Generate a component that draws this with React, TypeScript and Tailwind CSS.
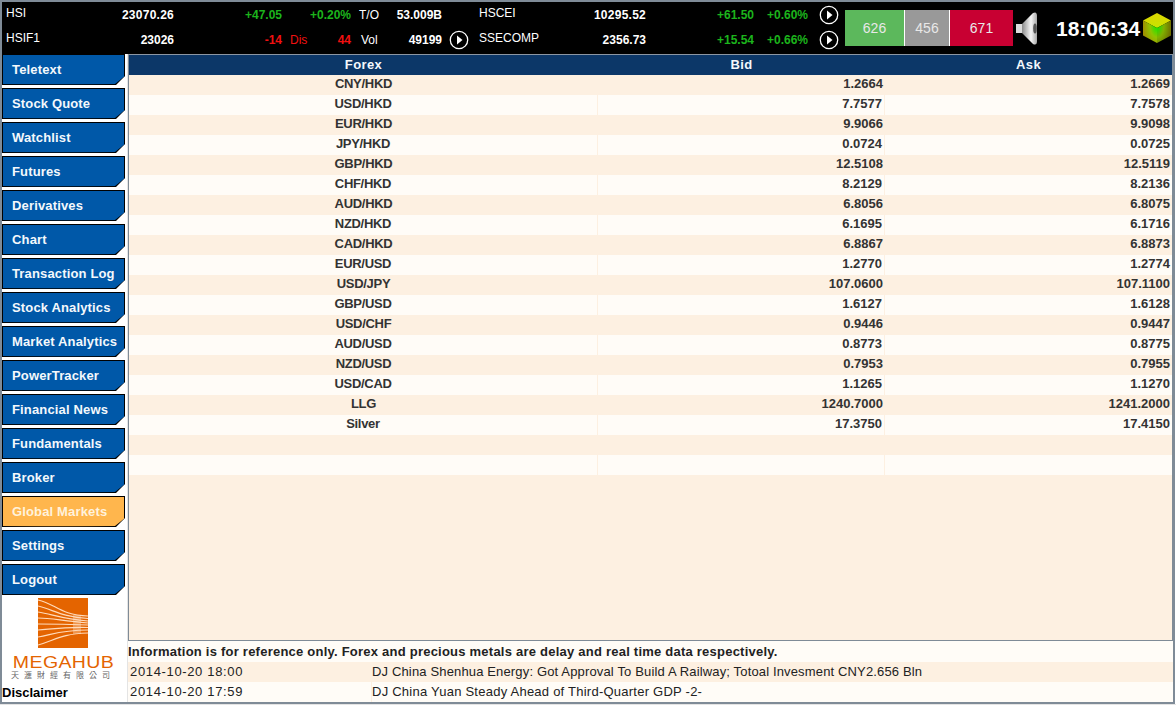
const font = "font-['Liberation_Sans',Arial,sans-serif]";

const quotes = [
  ["CNY/HKD", "1.2664", "1.2669"],
  ["USD/HKD", "7.7577", "7.7578"],
  ["EUR/HKD", "9.9066", "9.9098"],
  ["JPY/HKD", "0.0724", "0.0725"],
  ["GBP/HKD", "12.5108", "12.5119"],
  ["CHF/HKD", "8.2129", "8.2136"],
  ["AUD/HKD", "6.8056", "6.8075"],
  ["NZD/HKD", "6.1695", "6.1716"],
  ["CAD/HKD", "6.8867", "6.8873"],
  ["EUR/USD", "1.2770", "1.2774"],
  ["USD/JPY", "107.0600", "107.1100"],
  ["GBP/USD", "1.6127", "1.6128"],
  ["USD/CHF", "0.9446", "0.9447"],
  ["AUD/USD", "0.8773", "0.8775"],
  ["NZD/USD", "0.7953", "0.7955"],
  ["USD/CAD", "1.1265", "1.1270"],
  ["LLG", "1240.7000", "1241.2000"],
  ["Silver", "17.3750", "17.4150"],
  ["", "", ""],
  ["", "", ""],
];

const menu = [
  "Teletext",
  "Stock Quote",
  "Watchlist",
  "Futures",
  "Derivatives",
  "Chart",
  "Transaction Log",
  "Stock Analytics",
  "Market Analytics",
  "PowerTracker",
  "Financial News",
  "Fundamentals",
  "Broker",
  "Global Markets",
  "Settings",
  "Logout",
];

function PlayIcon() {
  return (
    <svg width="20" height="20" viewBox="0 0 20 20" className="shrink-0">
      <circle cx="10" cy="10" r="8.7" fill="none" stroke="#fff" strokeWidth="1.3" />
      <path d="M8 5.5 L13.5 10 L8 14.5 Z" fill="#fff" />
    </svg>
  );
}

function Speaker() {
  return (
    <svg width="24" height="33" viewBox="0 0 24 33">
      <defs>
        <linearGradient id="spk" x1="0" x2="1" y1="0" y2="0">
          <stop offset="0" stopColor="#8a8a8a" />
          <stop offset="0.6" stopColor="#f6f6f6" />
          <stop offset="1" stopColor="#a8a8a8" />
        </linearGradient>
      </defs>
      <rect x="1" y="12" width="7" height="9" fill="#dcdcdc" />
      <path d="M7 12 L18 1 Q22 -1 22 4 L22 29 Q22 34 18 32 L7 21 Z" fill="url(#spk)" />
      <ellipse cx="20" cy="16.5" rx="1.8" ry="5" fill="#555" />
    </svg>
  );
}

function Cube() {
  return (
    <svg width="30" height="32" viewBox="0 0 30 32">
      <defs>
        <radialGradient id="cubeTop" cx="0.5" cy="0.9" r="0.7">
          <stop offset="0" stopColor="#c8e400" />
          <stop offset="1" stopColor="#d8d800" />
        </radialGradient>
        <radialGradient id="cubeLeft" cx="1" cy="0.25" r="1">
          <stop offset="0" stopColor="#10e800" />
          <stop offset="0.5" stopColor="#90c400" />
          <stop offset="1" stopColor="#a09000" />
        </radialGradient>
        <radialGradient id="cubeRight" cx="0" cy="0.25" r="1">
          <stop offset="0" stopColor="#10e800" />
          <stop offset="0.5" stopColor="#80b000" />
          <stop offset="1" stopColor="#707000" />
        </radialGradient>
      </defs>
      <path d="M15 1 L29 8.5 L15 16 L1 8.5 Z" fill="url(#cubeTop)" />
      <path d="M1 8.5 L15 16 L15 31 L1 23.5 Z" fill="url(#cubeLeft)" />
      <path d="M29 8.5 L15 16 L15 31 L29 23.5 Z" fill="url(#cubeRight)" />
    </svg>
  );
}

function Logo() {
  return (
    <svg width="50" height="50" viewBox="0 0 50 50" className="block">
      <rect width="50" height="50" fill="#e46400" />
      <g fill="none" stroke="#ffdcbc" strokeWidth="1.2">
        <path d="M0 2 C18 6 22 17 50 18" />
        <path d="M0 8 C16 12 24 19 50 20.5" />
        <path d="M0 14 C14 16 24 21 50 23" />
        <path d="M0 20 C14 20 24 23 50 25" />
        <path d="M0 26 C14 26 24 26 50 27" />
        <path d="M0 32 C14 31 24 29 50 29.5" />
        <path d="M0 39 C16 36 24 32 50 32" />
        <path d="M0 47 C18 42 22 36 50 35" />
      </g>
      <rect x="35" y="17" width="8" height="19" fill="#ffdcbc" opacity="0.4" />
    </svg>
  );
}

function MenuButton({ label }: { label: string }) {
  const active = label === "Global Markets";
  return (
    <div className="h-[31px] w-[123px] bg-black [clip-path:polygon(0_0,100%_0,100%_calc(100%-9px),calc(100%-9px)_100%,0_100%)]">
      <div
        className={`flex h-[31px] w-[123px] items-center pt-[1px] pl-[9px] text-[13px] font-bold tracking-[0.15px] whitespace-nowrap border border-black [clip-path:polygon(0_0,100%_0,100%_calc(100%-9px),calc(100%-10px)_calc(100%-1px),0_100%)] ${
          active ? "bg-[#ffb64d] text-[#fff2dc]" : "bg-[#0058a8] text-[#f4f8fc]"
        }`}
      >
        {label}
      </div>
    </div>
  );
}

export default function App() {
  return (
    <div className="h-[705px] w-[1176px] border-b border-[#e4e4e4] bg-white">
      <div className={`${font} flex h-[704px] w-[1175px] flex-col overflow-hidden border-2 border-[#7f8b97] bg-white`}>
        {/* ticker bar */}
        <div className="flex h-[53px] shrink-0 items-start border-b border-[#8d97a3] bg-black pl-[4px] text-[12px] text-white">
          <div className="flex w-[833px] shrink-0 flex-col">
            <div className="flex h-[26px] items-center">
              <div className="w-[60px] pb-[4px]">HSI</div>
              <div className="w-[108px] text-right font-bold tracking-[0.25px]">23070.26</div>
              <div className="w-[108px] text-right font-bold text-[#1cb41c]">+47.05</div>
              <div className="w-[69px] text-right font-bold text-[#1cb41c]">+0.20%</div>
              <div className="w-[8px]" />
              <div className="w-[35px]">T/O</div>
              <div className="w-[48px] text-right font-bold">53.009B</div>
              <div className="w-[37px]" />
              <div className="w-[60px] pb-[4px]">HSCEI</div>
              <div className="w-[107px] text-right font-bold tracking-[0.25px]">10295.52</div>
              <div className="w-[108px] text-right font-bold text-[#1cb41c]">+61.50</div>
              <div className="w-[54px] text-right font-bold text-[#1cb41c]">+0.60%</div>
              <div className="ml-[11px]">
                <PlayIcon />
              </div>
            </div>
            <div className="flex h-[24px] items-center">
              <div className="w-[60px] pb-[5px]">HSIF1</div>
              <div className="w-[108px] text-right font-bold">23026</div>
              <div className="w-[108px] text-right font-bold text-[#f01010]">-14</div>
              <div className="ml-[8px] w-[28px] text-[#f01010]">Dis</div>
              <div className="w-[33px] text-right font-bold text-[#f01010]">44</div>
              <div className="w-[10px]" />
              <div className="w-[33px]">Vol</div>
              <div className="w-[48px] text-right font-bold">49199</div>
              <div className="ml-[7px]">
                <PlayIcon />
              </div>
              <div className="w-[10px]" />
              <div className="w-[60px] pb-[5px]">SSECOMP</div>
              <div className="w-[107px] text-right font-bold">2356.73</div>
              <div className="w-[108px] text-right font-bold text-[#1cb41c]">+15.54</div>
              <div className="w-[54px] text-right font-bold text-[#1cb41c]">+0.66%</div>
              <div className="ml-[11px]">
                <PlayIcon />
              </div>
            </div>
          </div>
          <div className="mt-[8px] ml-[6px] flex h-[36px] w-[168px] shrink-0 gap-[1px] bg-white text-[14px] leading-[36px] text-[#e8e8e8]">
            <div className="w-[59px] bg-[#5cb85c] text-center">626</div>
            <div className="w-[44px] bg-[#999999] text-center">456</div>
            <div className="w-[63px] bg-[#c80032] text-center">671</div>
          </div>
          <div className="mt-[10px] ml-[2px] shrink-0">
            <Speaker />
          </div>
          <div className="mt-[14px] ml-[17px] w-[86px] shrink-0 text-[21px] leading-[26px] font-bold whitespace-nowrap">18:06:34</div>
          <div className="mt-[10px] shrink-0">
            <Cube />
          </div>
        </div>

        <div className="flex min-h-0 flex-1">
          {/* side menu */}
          <div className="-mt-[1px] flex w-[126px] shrink-0 flex-col border-r border-[#e4e4e4] bg-white">
            <div className="flex flex-col gap-[3px]">
              {menu.map((m) => (
                <MenuButton key={m} label={m} />
              ))}
            </div>
            <div className="mt-[3px] flex w-[122px] flex-col items-center">
              <Logo />
              <div className="mt-[8px] scale-x-[1.22] text-[16px] leading-[14px] tracking-[0.3px] text-[#e46400]">MEGAHUB</div>
              <div className="font-['Noto_Sans_CJK_TC',sans-serif] text-[8px] leading-[10px] tracking-[5px] text-[#666]">天滙財經有限公司</div>
            </div>
            <div className="mt-auto pb-[1px] text-[13px] leading-[16px] font-bold text-black">Disclaimer</div>
          </div>

          {/* main area */}
          <div className="flex min-w-0 flex-1 flex-col bg-[#fffcf7]">
            <div className="h-[586px] shrink-0 overflow-hidden border-r border-b border-l border-[#7f8b97] bg-[#fdf0e1]">
              <div className="grid h-[20px] grid-cols-[469px_287px_1fr] items-center bg-[#0c3768] text-[13px] font-bold tracking-[0.4px] text-[#f4f8fc]">
                <div className="text-center">Forex</div>
                <div className="text-center">Bid</div>
                <div className="text-center">Ask</div>
              </div>
              {quotes.map((q, i) => (
                <div
                  key={i}
                  className={`grid h-[20px] grid-cols-[469px_287px_1fr] text-[13px] leading-[18px] font-bold text-[#333333] ${
                    i % 2 === 0 ? "bg-[#fdf0e1]" : "bg-[#fffcf7]"
                  }`}
                >
                  <div className={`text-center tracking-[-0.3px] ${i % 2 === 1 ? "border-r border-[#fdf0e1]" : ""}`}>{q[0]}</div>
                  <div className={`pr-[2px] text-right ${i % 2 === 1 ? "border-r border-[#fdf0e1]" : ""}`}>{q[1]}</div>
                  <div className="pr-[2px] text-right">{q[2]}</div>
                </div>
              ))}
            </div>
            <div className="h-[21px] shrink-0 text-[13px] leading-[21px] font-bold tracking-[0.23px] text-[#222]">
              Information is for reference only. Forex and precious metals are delay and real time data respectively.
            </div>
            <div className="flex h-[20px] shrink-0 items-center bg-[#fdf0e1] text-[13px] tracking-[0.15px] text-[#222]">
              <div className="w-[244px] pl-[2px] tracking-[0.65px]">2014-10-20 18:00</div>
              <div>DJ China Shenhua Energy: Got Approval To Build A Railway; Totoal Invesment CNY2.656 Bln</div>
            </div>
            <div className="flex h-[20px] shrink-0 items-center bg-[#fffcf7] text-[13px] tracking-[0.24px] text-[#222]">
              <div className="h-full w-[244px] border-r border-[#fdf0e1] pl-[2px] leading-[20px] tracking-[0.65px]">2014-10-20 17:59</div>
              <div>DJ China Yuan Steady Ahead of Third-Quarter GDP -2-</div>
            </div>
          </div>
        </div>
      </div>
    </div>
  );
}
